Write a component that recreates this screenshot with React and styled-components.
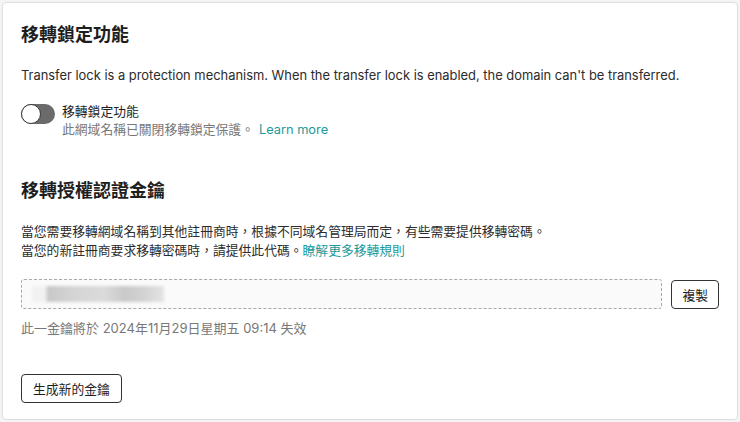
import React from 'react';
import styled, { createGlobalStyle } from 'styled-components';

const GlobalStyle = createGlobalStyle`
  html, body {
    margin: 0;
    padding: 0;
    background: #f4f4f4;
  }
  body {
    font-family: Inter, "Noto Sans CJK TC", sans-serif;
    color: #1e1e1e;
  }
`;

const Page = styled.div`
  width: 740px;
  height: 422px;
  padding: 2px;
  box-sizing: border-box;
`;

const Card = styled.div`
  height: 100%;
  box-sizing: border-box;
  background: #fff;
  border: 1px solid #dedede;
  border-radius: 4px;
  padding: 21px 18px 0 18px;
`;

const Section = styled.section`
  margin-bottom: ${(p) => p.gap || 0}px;
`;

const Title = styled.h2`
  margin: 0 0 ${(p) => p.mb || 20}px;
  font-size: 18px;
  font-weight: 600;
  line-height: 22px;
  color: #1e1e1e;
`;

const Text = styled.p`
  margin: 0;
  font-size: ${(p) => p.size || 13}px;
  line-height: ${(p) => p.lh || 18}px;
  color: ${(p) => (p.muted ? '#787878' : '#2c2c2c')};
`;

const Link = styled.a`
  color: #1a9a9c;
  text-decoration: none;
  cursor: pointer;
`;

const ToggleRow = styled.div`
  display: flex;
  align-items: flex-start;
  gap: 7px;
  margin-top: 17px;
`;

const Switch = styled.span`
  position: relative;
  flex: none;
  width: 34px;
  height: 20px;
  margin-top: 1px;
  border-radius: 10px;
  background: #6b6b6b;
  box-sizing: border-box;

  &::after {
    content: '';
    position: absolute;
    left: 0;
    top: 0;
    width: 20px;
    height: 20px;
    box-sizing: border-box;
    border-radius: 50%;
    background: #fff;
    border: 1.5px solid #3a3a3a;
  }
`;

const ToggleText = styled.div`
  display: flex;
  flex-direction: column;
  font-size: 12.8px;
  line-height: 18px;
`;

const Sep = styled.span`
  display: inline-block;
  width: 5px;
`;

const KeyRow = styled.div`
  display: flex;
  align-items: center;
  gap: 9px;
  margin-top: 19px;
`;

const KeyField = styled.div`
  flex: 1;
  height: 30px;
  box-sizing: border-box;
  border: 1px dashed #a8a8a8;
  border-radius: 3px;
  background: #fafafa;
  display: flex;
  align-items: center;
  padding-left: 10px;
`;

const Blurred = styled.div`
  width: 132px;
  height: 16px;
  background: linear-gradient(
    90deg,
    #f1f1f1 0%,
    #f1f1f1 10%,
    #c8c8c8 12%,
    #d6d6d6 35%,
    #dadada 55%,
    #c9c9c9 70%,
    #d3d3d3 85%,
    #e4e4e4 100%
  );
  filter: blur(1.5px);
`;

const Button = styled.button`
  flex: none;
  height: ${(p) => p.h || 29}px;
  padding: 0 ${(p) => p.px || 12}px;
  background: #fff;
  border: 1px solid #333;
  border-radius: 4px;
  font-family: inherit;
  font-size: 12.8px;
  color: #1e1e1e;
  cursor: pointer;
`;

const Expiry = styled(Text)`
  margin-top: 10px;
`;

const Footer = styled.div`
  margin-top: 37px;
`;

const App = () => {
  return (
    <Page>
      <GlobalStyle />
      <Card>
        <Section gap={41}>
          <Title>移轉鎖定功能</Title>
          <Text size={12.9} lh={20}>
            Transfer lock is a protection mechanism. When the transfer lock is enabled, the domain can't be transferred.
          </Text>
          <ToggleRow>
            <Switch />
            <ToggleText>
              <span>移轉鎖定功能</span>
              <Text muted size={12.8}>
                此網域名稱已關閉移轉鎖定保護。<Sep />
                <Link>Learn more</Link>
              </Text>
            </ToggleText>
          </ToggleRow>
        </Section>

        <Section>
          <Title mb={21}>移轉授權認證金鑰</Title>
          <Text size={12.8} lh={18.5}>
            當您需要移轉網域名稱到其他註冊商時，根據不同域名管理局而定，有些需要提供移轉密碼。
          </Text>
          <Text size={12.8} lh={18.5}>
            當您的新註冊商要求移轉密碼時，請提供此代碼。<Link>瞭解更多移轉規則</Link>
          </Text>
          <KeyRow>
            <KeyField>
              <Blurred />
            </KeyField>
            <Button px={10}>複製</Button>
          </KeyRow>
          <Expiry muted size={13}>此一金鑰將於 2024年11月29日星期五 09:14 失效</Expiry>
          <Footer>
            <Button px={11}>生成新的金鑰</Button>
          </Footer>
        </Section>
      </Card>
    </Page>
  );
};

export default App;
